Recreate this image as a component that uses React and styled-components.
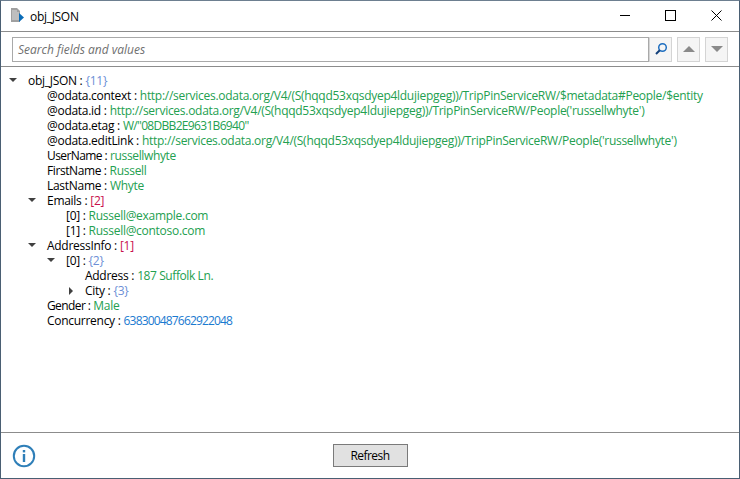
import React from "react"
import styled, { createGlobalStyle } from "styled-components"

const Global = createGlobalStyle`
html, body { margin:0; padding:0; background:#fff; }
body { font-family:"Open Sans","Noto Sans","Liberation Sans",sans-serif; }
`
const Win = styled.div`
width:740px;
height:479px;
box-sizing:border-box;
display:flex;
flex-direction:column;
border:1px solid #4a5f73;
border-top:1px solid #6d7f90;
background:#fff;
overflow:hidden;
`
const TitleBar = styled.div`
height:30px;
flex:none;
display:flex;
align-items:center;
padding-left:10px;
border-bottom:1px solid #8c8c8c;
`
const TitleText = styled.div`
margin-left:3px;
font-size:12px;
letter-spacing:-0.3px;
color:#000;
flex:1;
`
const WinButtons = styled.div`
display:flex;
height:100%;
`
const WinButton = styled.div`
width:46px;
height:100%;
box-sizing:border-box;
padding:0 0 1px 1px;
display:flex;
align-items:center;
justify-content:center;
`
const Toolbar = styled.div`
height:35px;
flex:none;
box-sizing:border-box;
display:flex;
align-items:center;
padding:0 11px;
border-bottom:1px solid #8c8c8c;
`
const SearchBox = styled.div`
width:637px;
height:25px;
box-sizing:border-box;
border:1px solid #a9a9a9;
display:flex;
align-items:center;
padding-left:5px;
font-size:12px;
font-style:italic;
color:#6f6f6f;
`
const IconButton = styled.div`
width:23px;
height:25px;
box-sizing:border-box;
display:flex;
align-items:center;
justify-content:center;
background:#f5f5f5;
border:1px solid #d4d4d4;
margin-left:${p => p.$gap}px;
`
const Tree = styled.div`
flex:1;
padding-top:6px;
`
const Row = styled.div`
height:15px;
display:flex;
align-items:center;
padding-left:${p => 27 + p.$depth * 19}px;
position:relative;
font-size:12px;
line-height:15px;
white-space:nowrap;
color:#000;
`
const Arrow = styled.svg`
position:absolute;
left:${p => 8 + p.$depth * 19}px;
top:4px;
`
const Label = styled.span`
letter-spacing:${p => p.$track}px;
`
const Value = styled.span`
color:${p => p.$color};
margin-left:3px;
letter-spacing:${p => p.$track}px;
`
const Footer = styled.div`
height:45px;
flex:none;
display:flex;
align-items:center;
justify-content:center;
position:relative;
border-top:1px solid #8c8c8c;
`
const InfoIcon = styled.svg`
position:absolute;
left:11px;
top:11px;
`
const RefreshButton = styled.div`
width:75px;
height:23px;
box-sizing:border-box;
border:1px solid #7a7a7a;
background:#e1e1e1;
display:flex;
align-items:center;
justify-content:center;
font-size:12px;
letter-spacing:-0.55px;
color:#000;
`

const GREEN = "#23a050"
const BLUE = "#6d8fd6"
const RED = "#c8104c"
const NUM = "#1a7ad0"

const base = "http://services.odata.org/V4/(S(hqqd53xqsdyep4ldujiepgeg))/TripPinServiceRW"

const rows = [
  { depth: 0, arrow: "open", label: "obj_JSON", value: "{11}", color: BLUE },
  { depth: 1, label: "@odata.context", value: base + "/$metadata#People/$entity", color: GREEN },
  { depth: 1, label: "@odata.id", value: base + "/People('russellwhyte')", color: GREEN },
  { depth: 1, label: "@odata.etag", value: 'W/"08DBB2E9631B6940"', color: GREEN, valueTrack: -0.68 },
  { depth: 1, label: "@odata.editLink", value: base + "/People('russellwhyte')", color: GREEN },
  { depth: 1, label: "UserName", value: "russellwhyte", color: GREEN, labelTrack: -0.6, valueTrack: -0.35 },
  { depth: 1, label: "FirstName", value: "Russell", color: GREEN, labelTrack: -0.4 },
  { depth: 1, label: "LastName", value: "Whyte", color: GREEN },
  { depth: 1, arrow: "open", label: "Emails", value: "[2]", color: RED },
  { depth: 2, label: "[0]", value: "Russell@example.com", color: GREEN },
  { depth: 2, label: "[1]", value: "Russell@contoso.com", color: GREEN },
  { depth: 1, arrow: "open", label: "AddressInfo", value: "[1]", color: RED },
  { depth: 2, arrow: "open", label: "[0]", value: "{2}", color: BLUE },
  { depth: 3, label: "Address", value: "187 Suffolk Ln.", color: GREEN, valueTrack: -0.41 },
  { depth: 3, arrow: "closed", label: "City", value: "{3}", color: BLUE },
  { depth: 1, label: "Gender", value: "Male", color: GREEN, labelTrack: -0.6 },
  { depth: 1, label: "Concurrency", value: "638300487662922048", color: NUM, valueTrack: -0.83 },
]

const AppIcon = () => (
  <svg width="16" height="16" viewBox="0 0 16 16">
    <path d="M0 0h6l3 3v11H0z" fill="#a0a0a0" />
    <path d="M1 3h5M1 5h7M1 7h7M1 9h7M1 11h7" stroke="#dcdcdc" strokeWidth="1" />
    <path d="M8 5l5 4.5L8 14z" fill="#0a6cb8" />
  </svg>
)

const App = () => (
  <>
    <Global />
    <Win>
      <TitleBar>
        <AppIcon />
        <TitleText>obj_JSON</TitleText>
        <WinButtons>
          <WinButton>
            <svg width="11" height="11" viewBox="0 0 11 11"><path d="M1 5.5h10" stroke="#000" /></svg>
          </WinButton>
          <WinButton>
            <svg width="11" height="11" viewBox="0 0 11 11"><rect x="0.5" y="0.5" width="10" height="10" fill="none" stroke="#000" /></svg>
          </WinButton>
          <WinButton>
            <svg width="11" height="11" viewBox="0 0 11 11"><path d="M0.5 0.5l10 10M10.5 0.5l-10 10" stroke="#000" /></svg>
          </WinButton>
        </WinButtons>
      </TitleBar>
      <Toolbar>
        <SearchBox>Search fields and values</SearchBox>
        <IconButton $gap={0}>
          <svg width="14" height="14" viewBox="0 0 14 14">
            <circle cx="8.5" cy="5.5" r="3.8" fill="none" stroke="#1f6fc0" strokeWidth="1.5" />
            <path d="M5.8 8.3L2 12" stroke="#123f7a" strokeWidth="2" />
          </svg>
        </IconButton>
        <IconButton $gap={5}>
          <svg width="12" height="6" viewBox="0 0 12 6"><path d="M0 6L6 0l6 6z" fill="#8a8a8a" /></svg>
        </IconButton>
        <IconButton $gap={5}>
          <svg width="12" height="6" viewBox="0 0 12 6"><path d="M0 0l6 6 6-6z" fill="#8a8a8a" /></svg>
        </IconButton>
      </Toolbar>
      <Tree>
        {rows.map((r, i) => (
          <Row key={i} $depth={r.depth}>
            {r.arrow === "open" && (
              <Arrow $depth={r.depth} width="9" height="7" viewBox="0 0 9 7"><path d="M0 1h8L4 5z" fill="#404040" /></Arrow>
            )}
            {r.arrow === "closed" && (
              <Arrow $depth={r.depth} width="9" height="9" viewBox="0 0 9 9"><path d="M3 0l4 4-4 4z" fill="#404040" /></Arrow>
            )}
            <Label $track={r.labelTrack ?? -0.28}>{r.label} :</Label>
            <Value $color={r.color} $track={r.valueTrack ?? -0.28}>{r.value}</Value>
          </Row>
        ))}
      </Tree>
      <Footer>
        <InfoIcon width="24" height="24" viewBox="0 0 24 24">
          <circle cx="12" cy="12" r="10.2" fill="none" stroke="#2f7fb8" strokeWidth="2" />
          <rect x="10.8" y="10" width="2.4" height="8" fill="#2f7fb8" />
          <rect x="10.8" y="6" width="2.4" height="2.4" fill="#2f7fb8" />
        </InfoIcon>
        <RefreshButton>Refresh</RefreshButton>
      </Footer>
    </Win>
  </>
)

export default App
